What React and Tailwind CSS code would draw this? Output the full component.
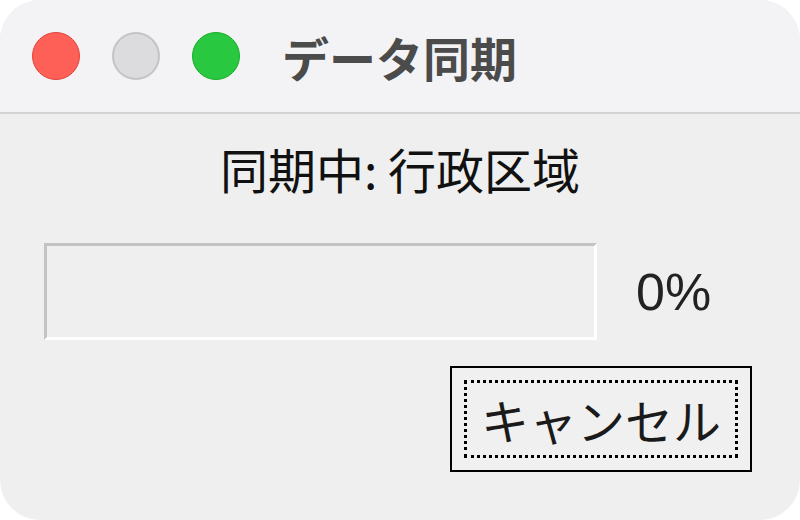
export default function App() {
  const jp = { fontFamily: '"Noto Sans CJK JP", "Noto Sans", sans-serif' };
  return (
    <div className="w-[800px] h-[520px] bg-white" style={jp}>
      <div className="w-full h-full rounded-[40px] overflow-hidden bg-[#efefef] flex flex-col">
        {/* title bar */}
        <div className="h-[114px] shrink-0 bg-[#f3f3f5] border-b-2 border-[#d3d3d3] flex items-center pl-[32px]">
          <div className="flex items-center gap-[32px]">
            <span className="block w-[48px] h-[48px] rounded-full bg-[#fe5f57] border border-[#e0443e]" />
            <span className="block w-[48px] h-[48px] rounded-full bg-[#dcdcde] border-2 border-[#c4c4c6]" />
            <span className="block w-[48px] h-[48px] rounded-full bg-[#28c840] border border-[#1aab29]" />
          </div>
          <div className="ml-[42px] text-[47px] leading-none font-bold text-[#4b4b4b]">
            データ同期
          </div>
        </div>

        {/* body */}
        <div className="flex-1 flex flex-col">
          <div className="mt-[30px] text-center text-[48px] leading-[48px] text-[#111]">
            同期中: 行政区域
          </div>

          <div className="mt-[51px] flex items-center pl-[44px]">
            <div className="w-[553px] h-[97px] border-[3px] border-t-[#c3c3c3] border-l-[#c3c3c3] border-b-white border-r-white bg-[#efefef]" />
            <div className="ml-[39px] text-[52px] leading-none text-[#222]" style={{ fontFamily: '"Liberation Sans", "Noto Sans CJK JP", sans-serif' }}>
              0%
            </div>
          </div>

          <div className="mt-[26px] flex justify-end pr-[48px]">
            <button className="w-[302px] h-[106px] border-2 border-black bg-[#f0f0f0] px-[12px] py-[12px] flex">
              <span className="flex-1 border-[3px] border-dotted border-black flex items-center justify-center text-[48px] leading-none text-[#1a1a1a]">
                キャンセル
              </span>
            </button>
          </div>
        </div>
      </div>
    </div>
  );
}
